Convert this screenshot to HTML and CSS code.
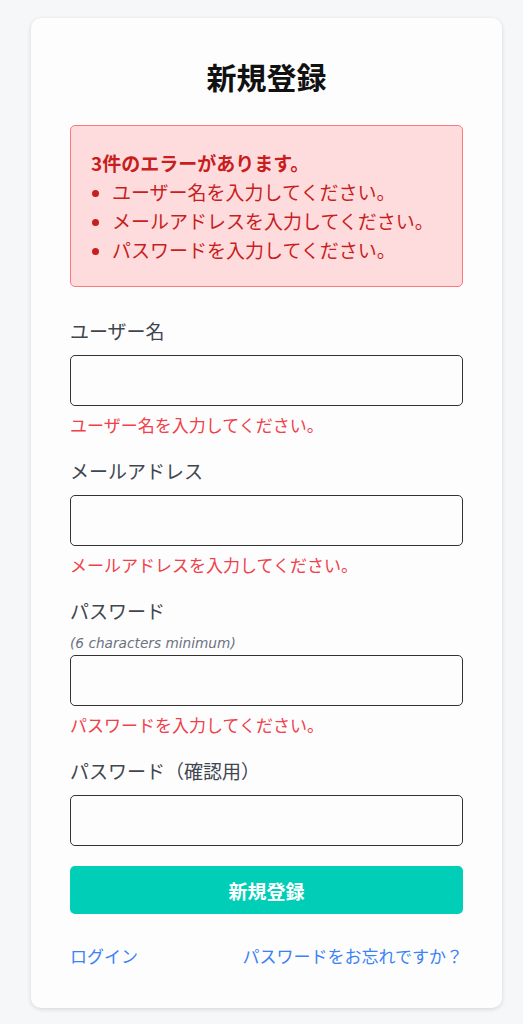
FILE: index.html
```html
<!DOCTYPE html>
<html lang="ja">
<head>
<meta charset="utf-8">
<title>新規登録</title>
<link rel="stylesheet" href="styles.css">
</head>
<body>
<main class="card">
  <h1 class="title">新規登録</h1>
  <div class="alert">
    <p class="alert-head">3件のエラーがあります。</p>
    <ul class="alert-list">
      <li>ユーザー名を入力してください。</li>
      <li>メールアドレスを入力してください。</li>
      <li>パスワードを入力してください。</li>
    </ul>
  </div>
  <form class="form">
    <div class="field">
      <label class="label">ユーザー名</label>
      <input class="input" type="text">
      <p class="err">ユーザー名を入力してください。</p>
    </div>
    <div class="field">
      <label class="label">メールアドレス</label>
      <input class="input" type="email">
      <p class="err">メールアドレスを入力してください。</p>
    </div>
    <div class="field">
      <label class="label label-hinted">パスワード</label>
      <em class="hint">(6 characters minimum)</em>
      <input class="input" type="password">
      <p class="err">パスワードを入力してください。</p>
    </div>
    <div class="field">
      <label class="label">パスワード（確認用）</label>
      <input class="input" type="password">
    </div>
    <button class="btn" type="button">新規登録</button>
  </form>
  <div class="links">
    <a class="link" href="#">ログイン</a>
    <a class="link" href="#">パスワードをお忘れですか？</a>
  </div>
</main>
</body>
</html>
```
FILE: styles.css
```css
* { box-sizing: border-box; }
html, body { margin: 0; padding: 0; }
body {
  background: #f6f7f9;
  font-family: "Noto Sans CJK JP", "Noto Sans", sans-serif;
  padding: 18px 21px 17px 31px;
}
.card {
  width: 471px;
  background: #fdfdfd;
  border-radius: 10px;
  box-shadow: 0 1px 4px rgba(0,0,0,0.10), 0 2px 6px rgba(0,0,0,0.04);
  padding: 40px 39px 40px 39px;
}
.title {
  margin: 0;
  text-align: center;
  font-size: 30px;
  line-height: 36px;
  font-weight: 700;
  color: #111;
}
.alert {
  margin-top: 31px;
  background: #fedcdd;
  border: 1px solid #f87a7a;
  border-radius: 5px;
  padding: 22px 8px 22px 20px;
  color: #c81e1e;
  font-size: 19px;
  line-height: 29px;
}
.alert-head { margin: 0; font-weight: 700; }
.alert-list { margin: 0; padding: 0 0 0 21px; list-style: disc; }
.alert-list li { white-space: nowrap; }
.alert-list li::marker { font-size: 17px; }
.form { margin-top: 30px; display: flex; flex-direction: column; }
.field { display: flex; flex-direction: column; margin-bottom: 20px; }
.label {
  font-size: 19px;
  line-height: 28px;
  color: #3f4650;
  margin-bottom: 10px;
}
.label-hinted { margin-bottom: 8px; }
.hint {
  font-family: "DejaVu Sans", "Liberation Sans", Arial, sans-serif;
  font-size: 13.7px;
  line-height: 20px;
  color: #6b7280;
  margin-bottom: 2px;
}
.input {
  height: 51px;
  border: 1px solid #333;
  border-radius: 5px;
  background: #fdfdfd;
  font-size: 16px;
}
.err {
  margin: 6px 0 0 0;
  font-size: 17px;
  line-height: 25px;
  color: #f0404a;
}
.btn {
  margin-top: 0;
  height: 48px;
  border: none;
  border-radius: 5px;
  background: #00ceb7;
  color: #fff;
  font-family: inherit;
  font-size: 19px;
  font-weight: 700;
}
.links {
  margin-top: 30px;
  display: flex;
  justify-content: space-between;
  font-size: 17px;
  line-height: 24px;
}
.link { color: #3b82f6; text-decoration: none; }
```
